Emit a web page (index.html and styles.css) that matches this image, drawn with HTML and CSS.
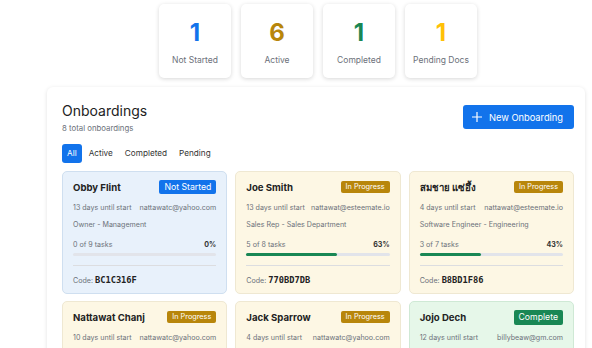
FILE: index.html
```html
<!DOCTYPE html>
<html>

<head>
	<meta charset="utf-8">
	<meta name="viewport" content="width=device-width, initial-scale=1.0">
	<title>Onboardings</title>
	<link rel="stylesheet" href="styles.css">
</head>

<body>
	<div class="page">
		<div class="stats">
			<div class="stat">
				<div class="stat-num blue">1</div>
				<span>Not Started</span>
			</div>
			<div class="stat">
				<div class="stat-num gold">6</div>
				<span>Active</span>
			</div>
			<div class="stat">
				<div class="stat-num green">1</div>
				<span>Completed</span>
			</div>
			<div class="stat">
				<div class="stat-num yellow">1</div>
				<span>Pending Docs</span>
			</div>
		</div>

		<div class="panel">
			<div class="panel-head">
				<div>
					<h1>Onboardings</h1>
					<p class="sub">8 total onboardings</p>
				</div>
				<button class="new-btn">
					<svg width="10" height="10" viewBox="0 0 10 10"><path d="M5 0v10M0 5h10" stroke="#fff" stroke-width="1.2" fill="none"/></svg>
					New Onboarding
				</button>
			</div>

			<div class="tabs">
				<span class="tab on">All</span>
				<span class="tab">Active</span>
				<span class="tab">Completed</span>
				<span class="tab">Pending</span>
			</div>

			<div class="grid">
				<div class="card not-started">
					<div class="card-top">
						<h2>Obby Flint</h2>
						<span class="badge b-blue">Not Started</span>
					</div>
					<div class="meta"><span>13 days until start</span><span>nattawatc@yahoo.com</span></div>
					<div class="role">Owner - Management</div>
					<div class="tasks"><span>0 of 9 tasks</span><b>0%</b></div>
					<div class="bar"><div class="fill" style="width:0%"></div></div>
					<div class="code">Code: <b>BC1C316F</b></div>
				</div>

				<div class="card progress">
					<div class="card-top">
						<h2>Joe Smith</h2>
						<span class="badge b-gold">In Progress</span>
					</div>
					<div class="meta"><span>13 days until start</span><span>nattawat@esteemate.io</span></div>
					<div class="role">Sales Rep - Sales Department</div>
					<div class="tasks"><span>5 of 8 tasks</span><b>63%</b></div>
					<div class="bar"><div class="fill" style="width:63%"></div></div>
					<div class="code">Code: <b>770BD7DB</b></div>
				</div>

				<div class="card progress">
					<div class="card-top">
						<h2>สมชาย แซ่อึ้ง</h2>
						<span class="badge b-gold">In Progress</span>
					</div>
					<div class="meta"><span>4 days until start</span><span>nattawat@esteemate.io</span></div>
					<div class="role">Software Engineer - Engineering</div>
					<div class="tasks"><span>3 of 7 tasks</span><b>43%</b></div>
					<div class="bar"><div class="fill" style="width:43%"></div></div>
					<div class="code">Code: <b>B8BD1F86</b></div>
				</div>

				<div class="card progress">
					<div class="card-top">
						<h2>Nattawat Chanj</h2>
						<span class="badge b-gold">In Progress</span>
					</div>
					<div class="meta"><span>10 days until start</span><span>nattawatc@yahoo.com</span></div>
				</div>

				<div class="card progress">
					<div class="card-top">
						<h2>Jack Sparrow</h2>
						<span class="badge b-gold">In Progress</span>
					</div>
					<div class="meta"><span>4 days until start</span><span>nattawatc@yahoo.com</span></div>
				</div>

				<div class="card done">
					<div class="card-top">
						<h2>Jojo Dech</h2>
						<span class="badge b-green">Complete</span>
					</div>
					<div class="meta"><span>12 days until start</span><span>billybeaw@gm.com</span></div>
				</div>
			</div>
		</div>
	</div>
</body>

</html>
```

FILE: styles.css
```css
* {
	margin: 0;
	padding: 0;
	box-sizing: border-box;
	font-family: Inter, "Noto Sans", sans-serif;
}

body {
	background: #fff;
	overflow: hidden;
	height: 348px;
}

.page {
	padding: 4px 7px 0 47px;
}

.stats {
	display: flex;
	justify-content: center;
	gap: 10px;
	margin-left: 4px;
	margin-bottom: 9px;
}

.stat {
	width: 72px;
	height: 74px;
	background: #fff;
	border-radius: 5px;
	box-shadow: 0 1px 4px rgba(0, 0, 0, .16);
	display: flex;
	flex-direction: column;
	align-items: center;
	padding-top: 16px;
}

.stat-num {
	font-size: 24px;
	font-weight: 700;
	line-height: 26px;
}

.stat span {
	margin-top: 9px;
	font-size: 8.5px;
	color: #6c717a;
}

.blue { color: #1273eb; }
.gold { color: #b8860b; }
.green { color: #198754; }
.yellow { color: #ffc107; }

.panel {
	background: #fff;
	border-radius: 6px;
	box-shadow: 0 1px 4px rgba(0, 0, 0, .12);
	padding: 15px 11px 20px 15px;
	height: 280px;
}

.panel-head {
	display: flex;
	justify-content: space-between;
	align-items: flex-start;
}

h1 {
	font-size: 14px;
	font-weight: 400;
	color: #222;
	line-height: 18px;
}

.sub {
	font-size: 7.8px;
	line-height: 10px;
	color: #6c717a;
	margin-top: 3px;
}

.new-btn {
	margin-top: 3px;
	width: 111px;
	height: 24px;
	background: #1273eb;
	border: none;
	border-radius: 3px;
	color: #fff;
	font-size: 9.3px;
	display: flex;
	align-items: center;
	justify-content: center;
	gap: 7px;
	padding-right: 2px;
}

.tabs {
	display: flex;
	gap: 2px;
	margin-top: 11px;
	align-items: center;
}

.tab {
	font-size: 8.2px;
	line-height: 19px;
	height: 19px;
	color: #333;
	padding: 0 5px;
}

.tab.on {
	background: #1273eb;
	color: #fff;
	border-radius: 3px;
}

.grid {
	display: grid;
	grid-template-columns: repeat(3, minmax(0, 1fr));
	gap: 7px 8px;
	margin-top: 8px;
}

.card {
	border-radius: 5px;
	border: 1px solid #e6e2d6;
	padding: 8px 10px 10px;
	height: 123px;
	overflow: hidden;
}

.card.not-started {
	background: #e8f1fb;
	border-color: #cfdff0;
}

.card.progress {
	background: #fdf7e4;
	border-color: #efe8d2;
}

.card.done {
	background: #e6f7e9;
	border-color: #cfe9d5;
}

.card-top {
	display: flex;
	justify-content: space-between;
	align-items: center;
	height: 14px;
}

h2 {
	font-size: 9.6px;
	font-weight: 700;
	color: #222;
}

.badge {
	font-size: 7.3px;
	line-height: 12px;
	color: #fff;
	padding: 0 5px;
	border-radius: 2px;
}

.b-blue {
	background: #1273eb;
	font-size: 8.7px;
	line-height: 14px;
}

.b-gold {
	background: #b8860b;
}

.b-green {
	background: #198754;
	font-size: 8.7px;
	line-height: 15px;
}

.meta,
.role,
.tasks,
.code {
	font-size: 7.1px;
	line-height: 10px;
	color: #6c717a;
	white-space: nowrap;
}

.meta {
	display: flex;
	justify-content: space-between;
	gap: 4px;
	margin-top: 9px;
}

.role {
	margin-top: 7px;
}

.tasks {
	display: flex;
	justify-content: space-between;
	margin-top: 10px;
}

.tasks b {
	color: #333;
}

.bar {
	height: 3px;
	background: #e2e4ea;
	margin-top: 3px;
	border-radius: 2px;
}

.fill {
	height: 100%;
	background: #198754;
	border-radius: 2px;
}

.code {
	border-top: 1px solid #dcdde0;
	margin-top: 9px;
	padding-top: 9px;
}

.code b {
	font-family: "DejaVu Sans Mono", monospace;
	font-size: 8.7px;
	color: #222;
}
```
